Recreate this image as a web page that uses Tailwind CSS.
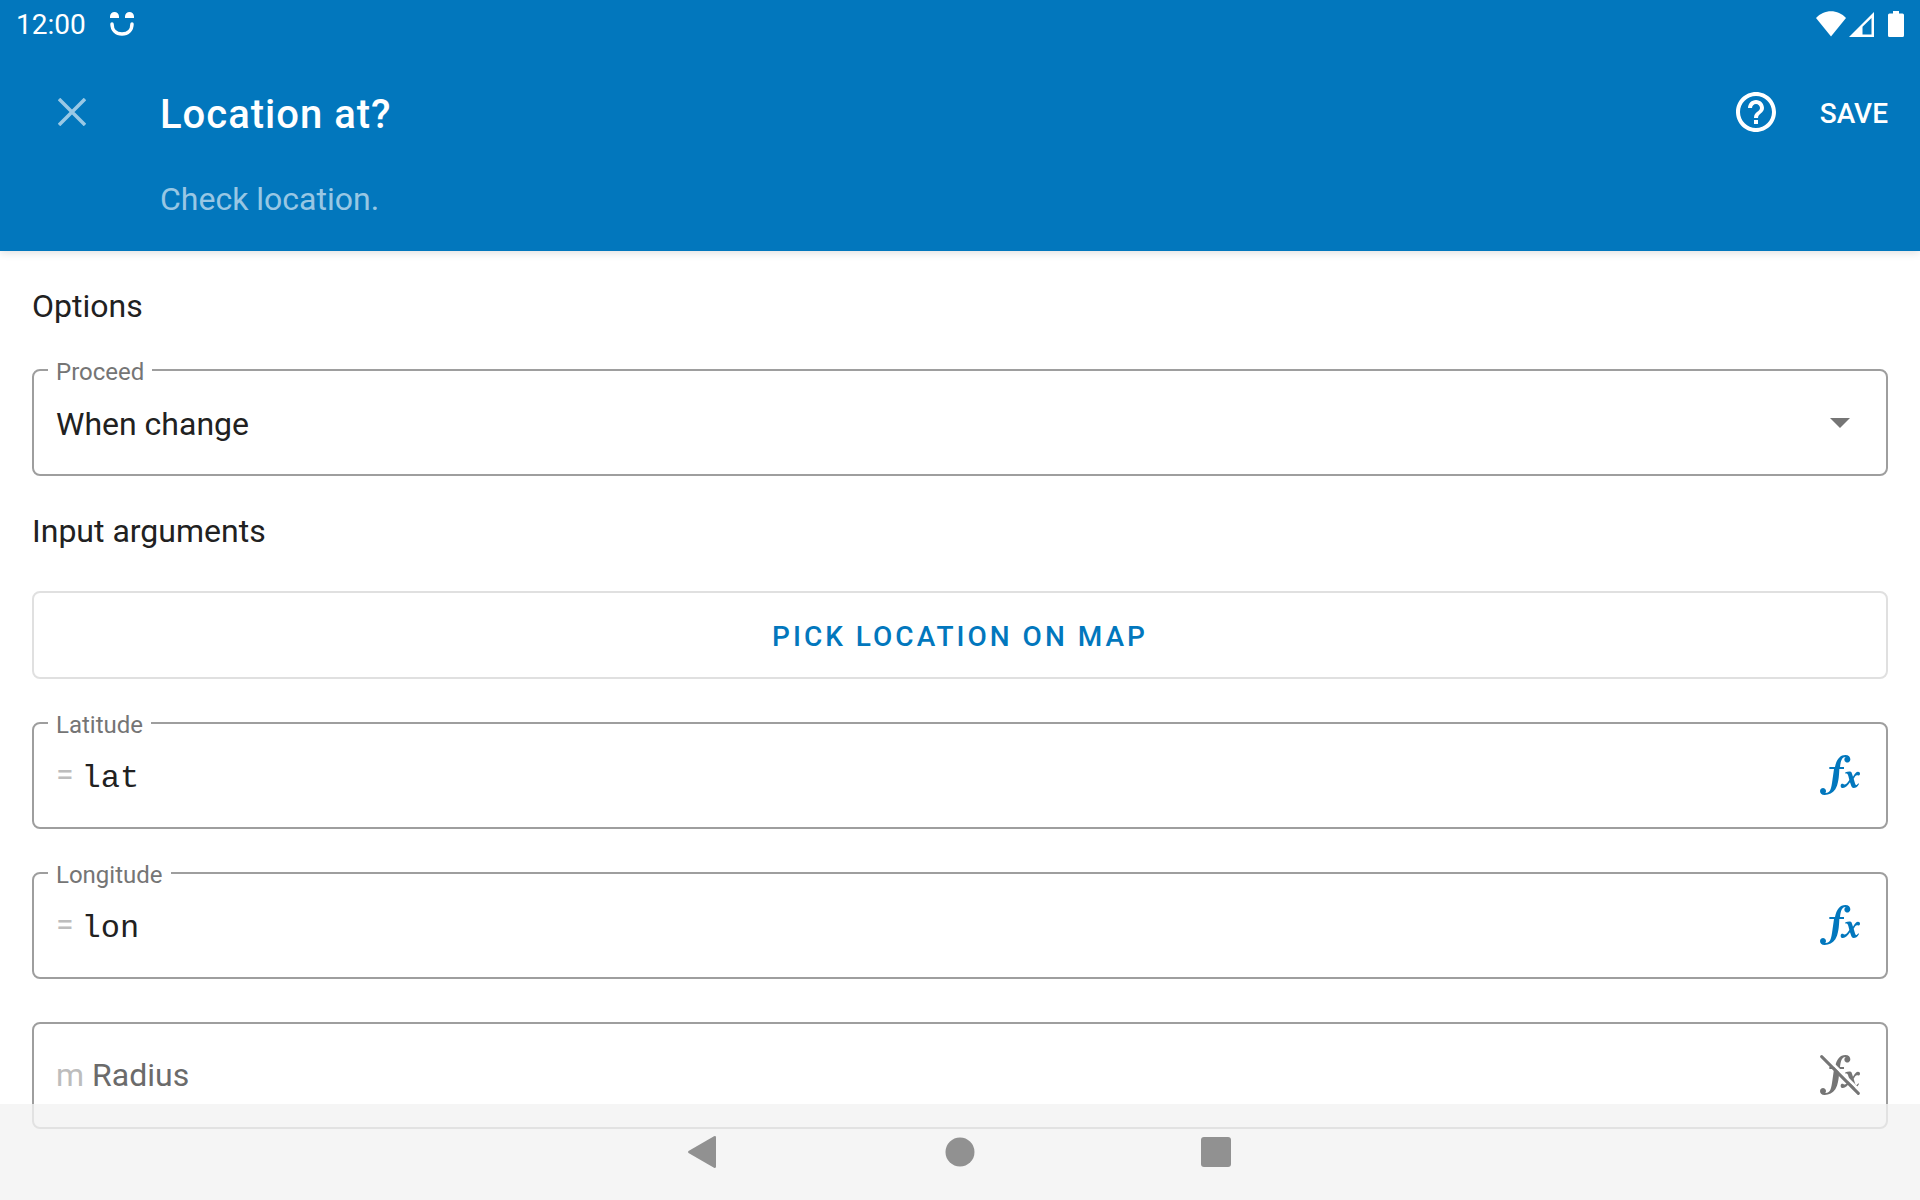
<!DOCTYPE html>
<html lang="en">
<head>
<meta charset="utf-8">
<meta name="viewport" content="width=device-width, initial-scale=1">
<title>Location at?</title>
<script src="https://cdn.jsdelivr.net/npm/@tailwindcss/browser@4"></script>
</head>
<body class="bg-white font-['Roboto',sans-serif] text-[32px] leading-10 text-[#212121]">

<svg class="hidden" aria-hidden="true">
  <symbol id="fx" viewBox="0 0 120 120">
    <path d="M28 36H45C49 14 60 0 76 0C86 0 91 6 91 13A9 9 0 1 1 77 6C66 5 62 18 60 36H72V42H58C57 66 55 88 46 103C38 115 27 120 14 120C4 120 0 115 0 108A9 9 0 1 1 16 114C29 115 33 104 36 84L42 42H28Z"/>
    <path d="M76 52C84 50 92 48 95 53L99 65C105 55 109 50 114 50C118 50 120 52 120 56C120 60 117 62 113 61C109 59 106 62 101 71L105 85C107 92 110 92 115 85L117 87C112 96 107 99 101 99C96 99 94 95 92 88L90 82C82 94 76 99 69 99C64 99 62 96 62 92C62 87 67 85 71 88C75 91 81 86 88 75L85 63C83 56 80 55 76 56Z"/>
  </symbol>
</svg>

<header class="bg-[#0277bd] text-white shadow-[0_2px_8px_rgba(0,0,0,0.12)]">
  <div class="flex h-12 items-center justify-between px-4 text-[28px] leading-8">
    <div class="flex items-center gap-6">
      <span class="pt-0.5">12:00</span>
      <svg class="size-6" viewBox="0 0 24 24" fill="#fff" aria-hidden="true">
        <path d="M0 6V4.500A4.500 4.500 0 0 1 9 4.500V6ZM15 6V4.500A4.500 4.500 0 0 1 24 4.500V6Z"/>
        <path d="M2 12C2 18 6 22 12 22S22 18 22 12" fill="none" stroke="#fff" stroke-width="3.500" stroke-linecap="round"/>
      </svg>
    </div>
    <div class="flex items-center">
      <svg class="h-[26px] w-[30px]" viewBox="0 0 30 26" fill="#fff" aria-hidden="true"><path d="M0 7C8-2 22-2 30 7L15 25.500Z"/></svg>
      <svg class="ml-[3px] h-[26px] w-[25px]" viewBox="0 0 25 26" fill="#fff" fill-rule="evenodd" aria-hidden="true"><path d="M25 1V26H0ZM22.500 7L13.500 15.800V23.500H22.500Z"/></svg>
      <svg class="ml-3.5 h-[26px] w-4" viewBox="0 0 16 26" fill="#fff" aria-hidden="true"><path d="M5 0H11V2.500H14.500Q16 2.500 16 4V24.500Q16 26 14.500 26H1.500Q0 26 0 24.500V4Q0 2.500 1.500 2.500H5Z"/></svg>
    </div>
  </div>
  <div class="flex h-32 items-center px-8">
    <button type="button" aria-label="Close" class="mr-12 flex size-20 items-center justify-center text-white/60">
      <svg class="size-7" viewBox="0 0 28 28" fill="none" stroke="currentColor" stroke-width="3.500" aria-hidden="true"><path d="M1 1L27 27M27 1L1 27"/></svg>
    </button>
    <h1 class="flex-1 pt-1.5 text-[40px] leading-[48px] font-medium tracking-[1px]">Location at?</h1>
    <button type="button" aria-label="Help" class="mr-10">
      <svg class="size-12" viewBox="0 0 24 24" fill="currentColor" aria-hidden="true"><path d="M11 18h2v-2h-2v2zm1-16C6.480 2 2 6.480 2 12s4.480 10 10 10 10-4.480 10-10S17.520 2 12 2zm0 18c-4.410 0-8-3.590-8-8s3.590-8 8-8 8 3.590 8 8-3.590 8-8 8zm0-14c-2.210 0-4 1.790-4 4h2c0-1.100.9-2 2-2s2 .9 2 2c0 2-3 1.750-3 5h2c0-2.250 3-2.500 3-5 0-2.210-1.790-4-4-4z"/></svg>
    </button>
    <button type="button" class="pt-1 text-[28px] leading-8 font-medium">SAVE</button>
  </div>
  <p class="h-[75px] pt-[3px] pl-40 text-white/60">Check location.</p>
</header>

<main class="px-8 pt-[35px] pb-16">
  <form>
    <h2>Options</h2>
    <div class="relative mt-[43px] h-[107px] rounded-lg border-2 border-[#9e9e9e]">
      <label for="proceed" class="absolute -top-[15px] left-3.5 bg-white px-2 text-[24px] leading-8 text-[#757575]">Proceed</label>
      <select id="proceed" class="size-full appearance-none bg-transparent px-[22px] pt-0.5 outline-none">
        <option>When change</option>
      </select>
      <svg class="pointer-events-none absolute top-[27px] right-[22px] size-12" viewBox="0 0 24 24" fill="#757575" aria-hidden="true"><path d="M7 10l5 5 5-5z"/></svg>
    </div>

    <h2 class="mt-[35px]">Input arguments</h2>
    <button type="button" class="mt-10 h-[88px] w-full rounded-lg border-2 border-[#e0e0e0] pt-1 text-[28px] leading-8 font-medium tracking-[3px] text-[#0277bd]">PICK LOCATION ON MAP</button>

    <div class="mt-[43px] flex flex-col gap-[43px]">
      <div class="relative flex h-[107px] items-center rounded-lg border-2 border-[#9e9e9e] px-[22px] pb-0.5">
        <label for="latitude" class="absolute -top-[15px] left-3.5 bg-white px-2 text-[24px] leading-8 text-[#757575]">Latitude</label>
        <span class="mr-2 pb-0.5 text-[#bdbdbd]">=</span>
        <input id="latitude" type="text" value="lat" class="min-w-0 flex-1 pt-2 font-['Liberation_Mono',monospace] outline-none">
        <button type="button" aria-label="Expression mode for latitude" class="flex size-12 items-center justify-center text-[#0277bd]"><svg class="size-10" fill="currentColor"><use href="#fx"/></svg></button>
      </div>
      <div class="relative flex h-[107px] items-center rounded-lg border-2 border-[#9e9e9e] px-[22px] pb-0.5">
        <label for="longitude" class="absolute -top-[15px] left-3.5 bg-white px-2 text-[24px] leading-8 text-[#757575]">Longitude</label>
        <span class="mr-2 pb-0.5 text-[#bdbdbd]">=</span>
        <input id="longitude" type="text" value="lon" class="min-w-0 flex-1 pt-2 font-['Liberation_Mono',monospace] outline-none">
        <button type="button" aria-label="Expression mode for longitude" class="flex size-12 items-center justify-center text-[#0277bd]"><svg class="size-10" fill="currentColor"><use href="#fx"/></svg></button>
      </div>
      <div class="flex h-[107px] items-center rounded-lg border-2 border-[#9e9e9e] px-[22px] pb-0.5">
        <label for="radius" class="mr-2 text-[#bdbdbd]">m</label>
        <input id="radius" type="text" placeholder="Radius" class="min-w-0 flex-1 outline-none placeholder:text-[#6b6b6b]">
        <button type="button" aria-label="Expression mode off for radius" class="flex size-12 items-center justify-center text-[#757575]">
          <svg class="size-10" viewBox="0 0 120 120" fill="currentColor">
            <use href="#fx"/>
            <path d="M8 -4L128 116" stroke="#fff" stroke-width="9"/>
            <path d="M5 5L115 115" stroke="currentColor" stroke-width="9" stroke-linecap="round"/>
          </svg>
        </button>
      </div>
    </div>
  </form>
</main>

<nav aria-label="System" class="fixed inset-x-0 bottom-0 flex h-24 items-center justify-center gap-52 bg-[#f2f2f2]/80 text-[#919191]">
  <button type="button" aria-label="Back"><svg class="size-12" viewBox="0 0 48 48" fill="currentColor"><path d="M8.500 23L34 8.300Q36 7.500 36 9.500V38.500Q36 40.500 34 39.700L8.500 25Q7.500 24 8.500 23Z"/></svg></button>
  <button type="button" aria-label="Home"><svg class="size-12" viewBox="0 0 48 48" fill="currentColor"><circle cx="24" cy="24" r="14.500"/></svg></button>
  <button type="button" aria-label="Overview"><svg class="size-12" viewBox="0 0 48 48" fill="currentColor"><rect x="9" y="9" width="30" height="30" rx="3"/></svg></button>
</nav>
</body>
</html>
